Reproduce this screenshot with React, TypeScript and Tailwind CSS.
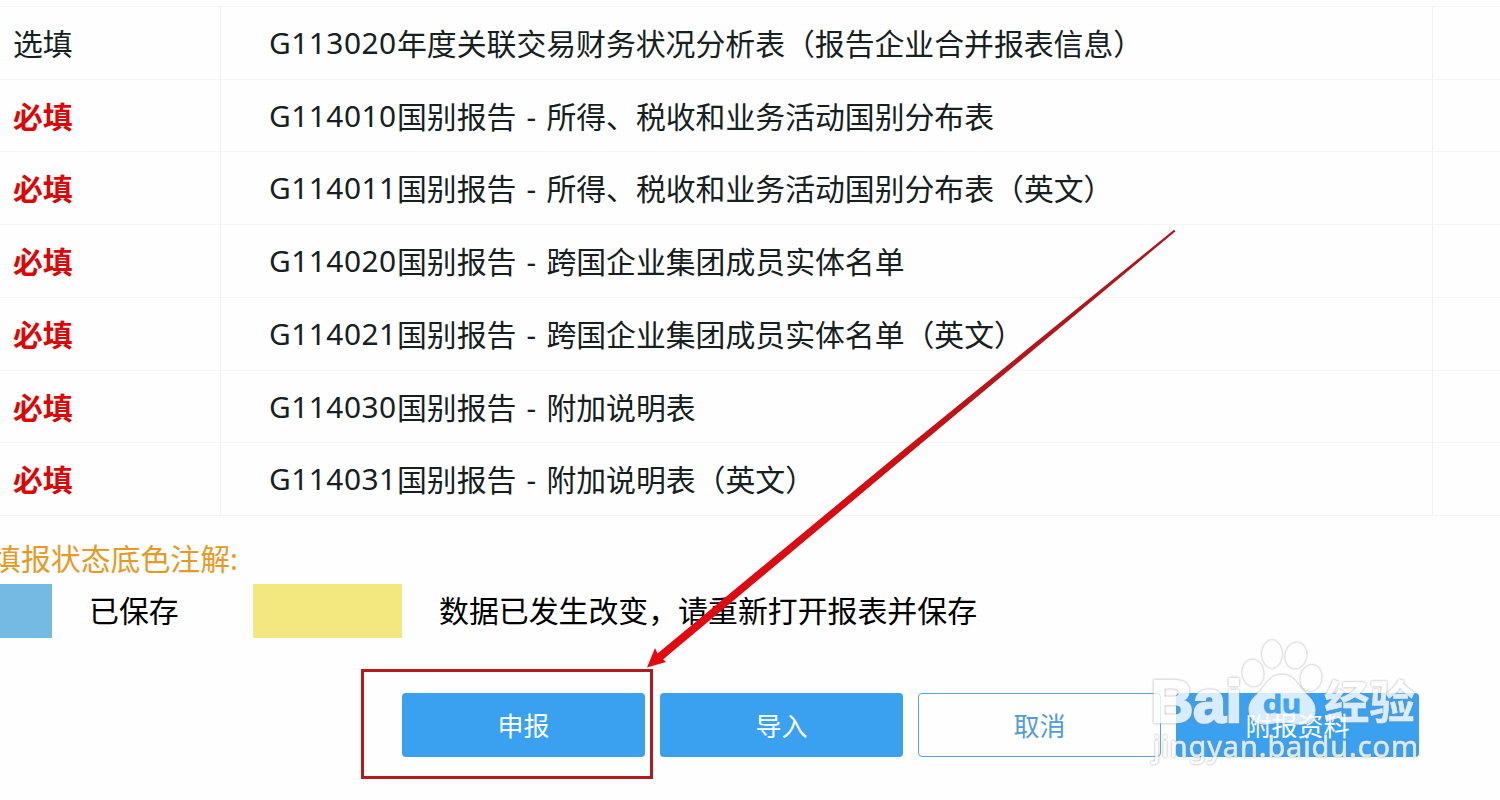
const forms = [
	{ required: false, code: "G113020", parts: ["年度关联交易财务状况分析表（报告企业合并报表信息）"] },
	{ required: true, code: "G114010", parts: ["国别报告", "所得、税收和业务活动国别分布表"] },
	{ required: true, code: "G114011", parts: ["国别报告", "所得、税收和业务活动国别分布表（英文）"] },
	{ required: true, code: "G114020", parts: ["国别报告", "跨国企业集团成员实体名单"] },
	{ required: true, code: "G114021", parts: ["国别报告", "跨国企业集团成员实体名单（英文）"] },
	{ required: true, code: "G114030", parts: ["国别报告", "附加说明表"] },
	{ required: true, code: "G114031", parts: ["国别报告", "附加说明表（英文）"] },
];

function FormTable() {
	return (
		<div className="grid h-[510px] grid-rows-7 border-t border-[#f4f6f6] text-[29.85px] leading-none text-[#15201f]">
			{forms.map(({ required, code, parts }) => (
				<div
					key={code}
					className="grid grid-cols-[221px_1212px_1fr] border-b border-[#f4f6f6]">
					<div className="flex items-center border-r border-[#f1f3f3] pt-[2px] pl-[13px]">
						<span className={required ? "font-bold text-[#dc0606]" : ""}>
							{required ? "必填" : "选填"}
						</span>
					</div>
					<div className="flex items-center whitespace-nowrap border-r border-[#f1f3f3] pt-[2px] pl-[48px]">
						<span className="w-[128px] -translate-y-px tracking-[0.5px]">{code}</span>
						<span>{parts[0]}</span>
						{parts[1] && (
							<>
								<span className="w-[30px] text-center">-</span>
								<span>{parts[1]}</span>
							</>
						)}
					</div>
					<div />
				</div>
			))}
		</div>
	);
}

function Legend() {
	return (
		<div className="whitespace-nowrap text-[29.9px] leading-none">
			<p className="-ml-[9px] pt-[28px] text-[#e59a26]">填报状态底色注解:</p>
			<div className="mt-[10px] flex h-[54px] items-center text-black">
				<div className="h-full w-[52px] bg-[#75bae2]" />
				<span className="ml-[37px] w-[164px]">已保存</span>
				<div className="h-full w-[149px] bg-[#f3e880]" />
				<span className="ml-[37px]">数据已发生改变，请重新打开报表并保存</span>
			</div>
		</div>
	);
}

function Actions() {
	return (
		<div className="mt-[55px] ml-[402px] flex h-[64px] gap-[15px] text-[26px] text-white">
			<button className="w-[243px] rounded-[4px] bg-[#3aa0f0] pt-[4px]">申报</button>
			<button className="w-[243px] rounded-[4px] bg-[#3aa0f0] pt-[4px]">导入</button>
			<button className="w-[243px] rounded-[4px] border border-[#5aa5d8] pt-[4px] text-[#549bd5]">
				取消
			</button>
			<button className="w-[243px] rounded-[4px] bg-[#3aa0f0] pt-[4px]">附报资料</button>
		</div>
	);
}

function Arrow() {
	return (
		<svg
			className="absolute inset-0"
			width="1500"
			height="800"
			viewBox="0 0 1500 800">
			<defs>
				<linearGradient id="arrow" x1="1" y1="0" x2="0" y2="1">
					<stop offset="0" stopColor="#a9161c" />
					<stop offset="0.35" stopColor="#b8151a" />
					<stop offset="0.6" stopColor="#d60d12" />
					<stop offset="1" stopColor="#e30a10" />
				</linearGradient>
			</defs>
			<path
				d="M1174 229.700 L1175.500 231.300 L909.500 453.300 L663.200 659.300 L666 662 L647 667.500 L655 648 L657.500 653.500 L905.500 448.200 Z"
				fill="url(#arrow)"
			/>
		</svg>
	);
}

function Watermark() {
	return (
		<svg
			className="absolute top-[630px] left-[1130px]"
			width="320"
			height="160"
			viewBox="0 0 320 160">
			<g className="opacity-80 drop-shadow-[0_0_1px_#8a8a8a]" fill="#fff" stroke="#fff">
				<ellipse cx="142" cy="24" rx="9.500" ry="13.500" />
				<ellipse cx="166" cy="25.500" rx="10" ry="12.500" transform="rotate(10 166 25)" />
				<ellipse cx="123" cy="43" rx="10" ry="13" transform="rotate(-8 123 43)" />
				<ellipse cx="181" cy="48" rx="10" ry="12.500" transform="rotate(12 181 48)" />
				<path d="M152 45 C162 45 166 52 171 59 C178 66 185 71 185 80 C185 91 178 95 167 94 C157 92 147 92 137 94 C126 95 119 89 119 79 C119 69 128 65 134 57 C139 50 143 45 152 45 Z" />
				<text
					x="21"
					y="91.500"
					fontFamily="Liberation Sans, sans-serif"
					fontSize="59"
					fontWeight="bold"
					strokeWidth="2.500"
					textLength="91"
					lengthAdjust="spacingAndGlyphs">
					Bai
				</text>
				<text
					x="194"
					y="89"
					fontFamily="Noto Sans CJK SC, sans-serif"
					fontSize="45"
					fontWeight="bold"
					strokeWidth="0.500"
					textLength="91"
					lengthAdjust="spacingAndGlyphs">
					经验
				</text>
				<text
					x="23"
					y="127"
					fontFamily="Noto Sans, sans-serif"
					fontSize="29"
					strokeWidth="0.500"
					textLength="265"
					lengthAdjust="spacing">
					jingyan.baidu.com
				</text>
			</g>
			<text
				x="133"
				y="83"
				fill="#45a4ee"
				stroke="#45a4ee"
				strokeWidth="0.800"
				fontFamily="Liberation Sans, sans-serif"
				fontSize="26"
				fontWeight="bold"
				textLength="38"
				lengthAdjust="spacingAndGlyphs">
				du
			</text>
		</svg>
	);
}

export default function App() {
	return (
		<main className="relative h-[800px] w-[1500px] overflow-hidden bg-[#fefefe] pt-[6px] font-['Noto_Sans','Noto_Sans_CJK_SC',sans-serif]">
			<FormTable />
			<Legend />
			<Actions />
			<div className="absolute top-[669px] left-[361px] h-[110px] w-[292px] border-3 border-[#b3191e]" />
			<Arrow />
			<Watermark />
		</main>
	);
}
